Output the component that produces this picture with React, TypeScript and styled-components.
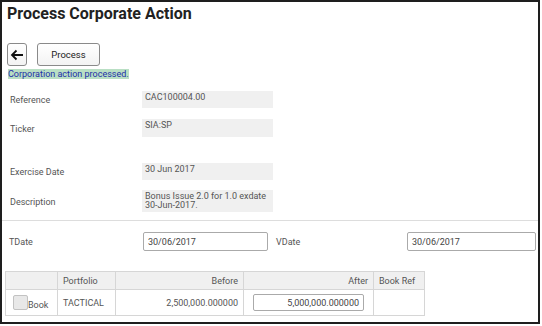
import styled, { createGlobalStyle } from "styled-components";

const GlobalStyle = createGlobalStyle`
  html, body {
    margin: 0;
    padding: 0;
    background: #fff;
  }
  body {
    font-family: Roboto, "Liberation Sans", Arial, sans-serif;
    color: #444;
  }
`;

const Frame = styled.div`
  width: 540px;
  height: 324px;
  box-sizing: border-box;
  border: 2px solid #1e1e1e;
  display: flex;
  flex-direction: column;
`;

const Title = styled.h1`
  margin: 0;
  padding: 2px 0 0 5px;
  font-size: 16px;
  line-height: 20px;
  font-weight: 700;
  color: #222;
`;

const Toolbar = styled.div`
  display: flex;
  gap: 10px;
  margin: 19px 0 0 5px;
`;

const Button = styled.button<{ $wide?: boolean }>`
  box-sizing: border-box;
  height: 23px;
  width: ${(p) => (p.$wide ? "63px" : "20px")};
  padding: 0;
  border: 1px solid #8a8a8a;
  border-radius: 3px;
  background: linear-gradient(#ffffff, #f3f3f3);
  font-family: inherit;
  font-size: 9.5px;
  color: #222;
  display: flex;
  align-items: center;
  justify-content: center;
`;

const Message = styled.div`
  margin: 3px 0 0 6px;
  font-size: 9px;
  line-height: 10px;
  height: 10px;
  span {
    background: #b9dfc4;
    color: #1d2fa8;
  }
`;

const Field = styled.div<{ $top: number }>`
  display: grid;
  grid-template-columns: 132px 131px;
  align-items: center;
  margin: ${(p) => p.$top}px 0 0 8px;
`;

const Label = styled.div`
  font-size: 9px;
  line-height: 10px;
  color: #555;
  padding-top: 1px;
`;

const Value = styled.div<{ $h: number }>`
  background: #f0f0f0;
  height: ${(p) => p.$h}px;
  padding: 2px 3px 0;
  box-sizing: border-box;
  font-size: 9px;
  line-height: 9px;
  color: #555;
`;

const Divider = styled.hr`
  border: none;
  border-top: 1px solid #ddd;
  margin: 8px 0 0;
`;

const DateRow = styled.div`
  display: grid;
  grid-template-columns: 134px 125px 8px 131px 129px;
  align-items: center;
  margin: 11px 0 0 7px;
`;

const Input = styled.div<{ $right?: boolean; $h?: number }>`
  box-sizing: border-box;
  height: ${(p) => p.$h ?? 19}px;
  border: 1px solid #aaa;
  border-radius: 2px;
  background: #fff;
  padding: 0 4px;
  display: flex;
  align-items: center;
  justify-content: ${(p) => (p.$right ? "flex-end" : "flex-start")};
  font-size: 9px;
  color: #444;
`;

const Table = styled.table`
  border-collapse: collapse;
  table-layout: fixed;
  width: 419px;
  margin: 20px 0 0 3px;
  font-size: 9px;
  color: #555;
  td, th {
    border: 1px solid #d6d6d6;
    padding: 0 5px;
    font-weight: 400;
    box-sizing: border-box;
  }
  th {
    background: #f0f0f0;
    height: 18px;
  }
  td {
    height: 26px;
  }
`;

const Col = styled.col<{ $w: number }>`
  width: ${(p) => p.$w}px;
`;

const Cell = styled.td<{ $right?: boolean }>`
  text-align: ${(p) => (p.$right ? "right" : "left")};
`;

const Head = styled.th<{ $right?: boolean }>`
  text-align: ${(p) => (p.$right ? "right" : "left")};
`;

const InputCell = styled.td`
  padding: 0 9px !important;
`;

const BookCell = styled.td`
  white-space: nowrap;
  padding: 0 0 0 7px !important;
`;

const BookLabel = styled.label`
  display: flex;
  align-items: flex-end;
  line-height: 9px;
`;

const Check = styled.span`
  display: inline-block;
  width: 15px;
  height: 15px;
  border: 1px solid #c2c2c2;
  border-radius: 2px;
  background: #e8e8e8;
  box-sizing: border-box;
`;

const BackIcon = () => (
  <svg width="14" height="12" viewBox="0 0 14 12" fill="none" stroke="#111" strokeWidth="1.8">
    <path d="M13 6H2M6.5 1.5L2 6l4.5 4.5" />
  </svg>
);

export default function App() {
  return (
    <>
      <GlobalStyle />
      <Frame>
        <Title>Process Corporate Action</Title>
        <Toolbar>
          <Button aria-label="Back">
            <BackIcon />
          </Button>
          <Button $wide>Process</Button>
        </Toolbar>
        <Message>
          <span>Corporation action processed.</span>
        </Message>
        <Field $top={12}>
          <Label>Reference</Label>
          <Value $h={17}>CAC100004.00</Value>
        </Field>
        <Field $top={11}>
          <Label>Ticker</Label>
          <Value $h={18}>SIA:SP</Value>
        </Field>
        <Field $top={26}>
          <Label>Exercise Date</Label>
          <Value $h={17}>30 Jun 2017</Value>
        </Field>
        <Field $top={10}>
          <Label>Description</Label>
          <Value $h={22}>
            Bonus Issue 2.0 for 1.0 exdate
            <br />
            30-Jun-2017.
          </Value>
        </Field>
        <Divider />
        <DateRow>
          <Label>TDate</Label>
          <Input>30/06/2017</Input>
          <span />
          <Label>VDate</Label>
          <Input>30/06/2017</Input>
        </DateRow>
        <Table>
          <colgroup>
            <Col $w={52} />
            <Col $w={58} />
            <Col $w={128} />
            <Col $w={130} />
            <Col $w={51} />
          </colgroup>
          <thead>
            <tr>
              <Head></Head>
              <Head>Portfolio</Head>
              <Head $right>Before</Head>
              <Head $right>After</Head>
              <Head>Book Ref</Head>
            </tr>
          </thead>
          <tbody>
            <tr>
              <BookCell>
                <BookLabel>
                  <Check />
                  Book
                </BookLabel>
              </BookCell>
              <Cell>TACTICAL</Cell>
              <Cell $right>2,500,000.000000</Cell>
              <InputCell>
                <Input $right $h={17}>
                  5,000,000.000000
                </Input>
              </InputCell>
              <Cell></Cell>
            </tr>
          </tbody>
        </Table>
      </Frame>
    </>
  );
}
